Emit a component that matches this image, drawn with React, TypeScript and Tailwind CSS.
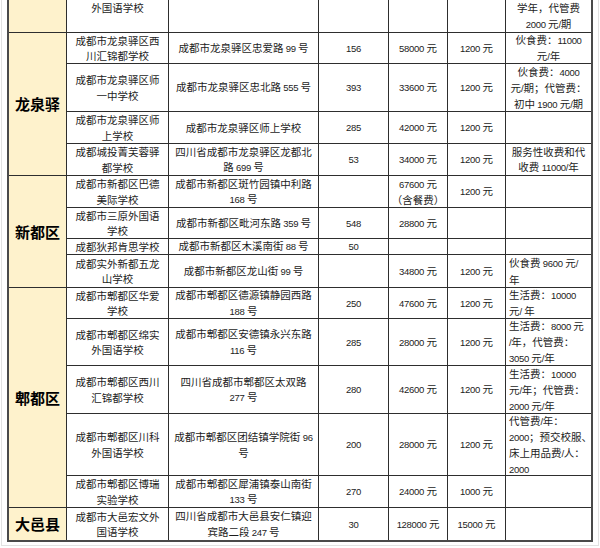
import React from "react";

type Row = {
  c2: string[];
  c3: string[];
  c4: string;
  c5: string[];
  c6: string;
  c7: string[];
  left7?: boolean;
  top?: boolean;
};

const rows: Row[] = [
  { c2: ["外国语学校"], c3: [], c4: "", c5: [], c6: "", c7: ["学年，代管费", "2000 元/期"], top: true },
  { c2: ["成都市龙泉驿区西", "川汇锦都学校"], c3: ["成都市龙泉驿区忠爱路 99 号"], c4: "156", c5: ["58000 元"], c6: "1200 元", c7: ["伙食费：11000", "元/年"] },
  { c2: ["成都市龙泉驿区师", "一中学校"], c3: ["成都市龙泉驿区忠北路 555 号"], c4: "393", c5: ["33600 元"], c6: "1200 元", c7: ["伙食费：4000", "元/期；代管费：", "初中 1900 元/期"] },
  { c2: ["成都市龙泉驿区师", "上学校"], c3: ["成都市龙泉驿区师上学校"], c4: "285", c5: ["42000 元"], c6: "1200 元", c7: [] },
  { c2: ["成都城投菁芙蓉驿", "都学校"], c3: ["四川省成都市龙泉驿区龙都北", "路 699 号"], c4: "53", c5: ["34000 元"], c6: "1200 元", c7: ["服务性收费和代", "收费 11000/年"] },
  { c2: ["成都市新都区巴德", "美际学校"], c3: ["成都市新都区斑竹园镇中利路", "168 号"], c4: "", c5: ["67600 元", "（含餐费）"], c6: "1200 元", c7: [] },
  { c2: ["成都市三原外国语", "学校"], c3: ["成都市新都区毗河东路 359 号"], c4: "548", c5: ["28800 元"], c6: "", c7: [] },
  { c2: ["成都狄邦肯思学校"], c3: ["成都市新都区木溪南街 88 号"], c4: "50", c5: [], c6: "", c7: [] },
  { c2: ["成都实外新都五龙", "山学校"], c3: ["成都市新都区龙山街 99 号"], c4: "", c5: ["34800 元"], c6: "1200 元", c7: ["伙食费 9600 元/", "年"], left7: true },
  { c2: ["成都市郫都区华爱", "学校"], c3: ["成都市郫都区德源镇静园西路", "188 号"], c4: "250", c5: ["47600 元"], c6: "1200 元", c7: ["生活费：10000", "元/ 年"], left7: true },
  { c2: ["成都市郫都区绵实", "外国语学校"], c3: ["成都市郫都区安德镇永兴东路", "116 号"], c4: "285", c5: ["28000 元"], c6: "1200 元", c7: ["生活费：8000 元", "/年，代管费：", "3050 元/年"], left7: true },
  { c2: ["成都市郫都区西川", "汇锦都学校"], c3: ["四川省成都市郫都区太双路", "277 号"], c4: "280", c5: ["42600 元"], c6: "1200 元", c7: ["生活费：10000", "元/年；代管费：", "2000 元/年"], left7: true },
  { c2: ["成都市郫都区川科", "外国语学校"], c3: ["成都市郫都区团结镇学院街 96", "号"], c4: "200", c5: ["28000 元"], c6: "1200 元", c7: ["代管费/年：", "2000；预交校服、", "床上用品费/人：", "2000"], left7: true },
  { c2: ["成都市郫都区博瑞", "实验学校"], c3: ["成都市郫都区犀浦镇泰山南街", "133 号"], c4: "270", c5: ["24000 元"], c6: "1000 元", c7: [] },
  { c2: ["成都市大邑宏文外", "国语学校"], c3: ["四川省成都市大邑县安仁镇迎", "宾路二段 247 号"], c4: "30", c5: ["128000 元"], c6: "15000 元", c7: [] },
];

const regions: Record<number, { name: string; span: string }> = {
  1: { name: "龙泉驿", span: "row-span-4" },
  5: { name: "新都区", span: "row-span-4" },
  9: { name: "郫都区", span: "row-span-5" },
  14: { name: "大邑县", span: "row-span-1" },
};

function Txt({ s }: { s: string }) {
  const parts = s.split(/([0-9A-Za-z/ .]+)/);
  return (
    <>
      {parts.map((p, i) =>
        /^[0-9A-Za-z/ .]+$/.test(p) ? (
          <span
            key={i}
            className="font-['Liberation_Sans',sans-serif] text-[9.5px] tracking-[-0.3px]"
          >
            {p}
          </span>
        ) : (
          <span key={i}>{p}</span>
        )
      )}
    </>
  );
}

function Cell({
  lines,
  align = "center",
  top = false,
}: {
  lines: string[];
  align?: "center" | "left";
  top?: boolean;
}) {
  return (
    <div
      className={`bg-white flex flex-col overflow-hidden px-[3px] ${
        lines.length >= 3 ? "leading-[15px]" : "leading-[15.5px]"
      } ${top ? "justify-start leading-[16px]" : "justify-center"} ${
        align === "left" ? "items-start text-left" : "items-center text-center"
      }`}
    >
      {lines.map((l, i) => (
        <div key={i} className="whitespace-nowrap">
          <Txt s={l} />
        </div>
      ))}
    </div>
  );
}

export default function App() {
  return (
    <div className="w-[600px] h-[548px] bg-white overflow-hidden font-['Noto_Sans_CJK_SC',sans-serif] text-[10.5px] leading-[15.5px] text-[#1c1c1c]">
      <div className="ml-[1px] w-[598px] h-[546px] border-x border-b border-[#e2e2e2] pl-[5px]">
        <div className="w-[586px] border-l-2 border-r-2 border-b-2 border-[#4a4a4a]">
          <div className="grid grid-cols-[57px_101px_149px_69px_58px_57px_85px] grid-rows-[32px_30px_47px_31px_31px_31px_30px_15px_32px_30px_46px_47px_61px_31px_32px] gap-px bg-[#2e2e2e]">
            {rows.map((r, i) => (
              <React.Fragment key={i}>
                {i === 0 && <div className="bg-[#fef2cc]" />}
                {regions[i] && (
                  <div
                    className={`${regions[i].span} bg-[#fef2cc] flex items-center justify-center text-[15px] font-bold text-black`}
                  >
                    {regions[i].name}
                  </div>
                )}
                <Cell lines={r.c2} top={r.top} />
                <Cell lines={r.c3} top={r.top} />
                <Cell lines={r.c4 ? [r.c4] : []} top={r.top} />
                <Cell lines={r.c5} top={r.top} />
                <Cell lines={r.c6 ? [r.c6] : []} top={r.top} />
                <Cell lines={r.c7} top={r.top} align={r.left7 ? "left" : "center"} />
              </React.Fragment>
            ))}
          </div>
        </div>
      </div>
    </div>
  );
}
